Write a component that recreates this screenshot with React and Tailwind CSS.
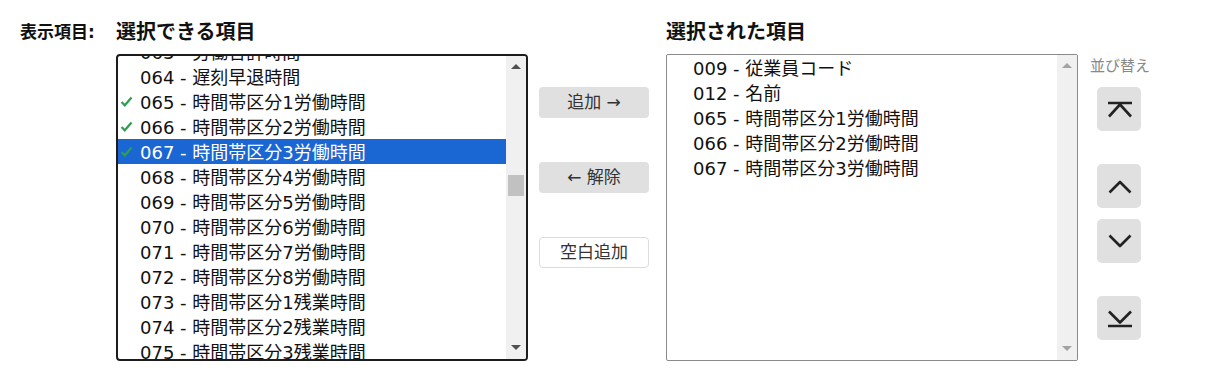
const leftItems = [
  { code: "063", name: "労働合計時間" },
  { code: "064", name: "遅刻早退時間" },
  { code: "065", name: "時間帯区分1労働時間", checked: true },
  { code: "066", name: "時間帯区分2労働時間", checked: true },
  { code: "067", name: "時間帯区分3労働時間", checked: true, active: true },
  { code: "068", name: "時間帯区分4労働時間" },
  { code: "069", name: "時間帯区分5労働時間" },
  { code: "070", name: "時間帯区分6労働時間" },
  { code: "071", name: "時間帯区分7労働時間" },
  { code: "072", name: "時間帯区分8労働時間" },
  { code: "073", name: "時間帯区分1残業時間" },
  { code: "074", name: "時間帯区分2残業時間" },
  { code: "075", name: "時間帯区分3残業時間" },
  { code: "076", name: "時間帯区分4残業時間" },
];

const rightItems = [
  { code: "009", name: "従業員コード" },
  { code: "012", name: "名前" },
  { code: "065", name: "時間帯区分1労働時間" },
  { code: "066", name: "時間帯区分2労働時間" },
  { code: "067", name: "時間帯区分3労働時間" },
];

const Check = () => (
  <svg width="13" height="13" viewBox="0 0 13 13" className="ml-[2px]">
    <path d="M1.5 7 L4.8 10.3 L11.5 2.5" fill="none" stroke="#2f9e52" strokeWidth="2.2" />
  </svg>
);

const Scrollbar = ({ disabled }) => (
  <div className="w-[20px] h-full bg-[#f0f0f0] flex flex-col items-center relative">
    <svg width="10" height="6" viewBox="0 0 10 6" className="mt-[8px]">
      <path d="M0 5 L5 0 L10 5 Z" fill={disabled ? "#a3a3a3" : "#505050"} />
    </svg>
    {!disabled && (
      <div className="absolute left-[2px] top-[119px] w-[16px] h-[21px] bg-[#c1c1c1]" />
    )}
    <div className="flex-1" />
    <svg width="10" height="6" viewBox="0 0 10 6" className="mb-[8px]">
      <path d="M0 0 L10 0 L5 5 Z" fill={disabled ? "#a3a3a3" : "#505050"} />
    </svg>
  </div>
);

const Row = ({ item, pad }) => (
  <div
    className={
      "h-[25px] flex items-center whitespace-nowrap " +
      (item.active ? "bg-[#1a66d2] text-white" : "text-[#111]")
    }
  >
    <div className={pad}>{item.checked && <Check />}</div>
    <span className="pt-[2px]">
      {item.code} - {item.name}
    </span>
  </div>
);

const MoveButton = ({ children }) => (
  <button className="w-[110px] h-[31px] rounded-[4px] bg-[#e0e0e0] text-[#333] text-[17px] leading-none">
    {children}
  </button>
);

const SortButton = ({ d, className }) => (
  <button className={"w-[44px] h-[44px] rounded-[5px] bg-[#e0e0e0] " + className}>
    <svg width="44" height="44" viewBox="0 0 44 44">
      <path d={d} fill="none" stroke="#222" strokeWidth="2.6" strokeLinejoin="round" />
    </svg>
  </button>
);

export default function App() {
  return (
    <div
      className="w-[1228px] h-[381px] bg-white pt-[20px] pl-[20px] flex items-start text-[18px]"
      style={{ fontFamily: '"DejaVu Sans", "Noto Sans CJK JP", sans-serif' }}
    >
      <div className="w-[96px] text-[17px] leading-[24px] font-bold text-[#111]">表示項目:</div>

      <div className="w-[412px]">
        <div className="text-[20px] leading-[24px] font-bold text-[#111]">選択できる項目</div>
        <div className="mt-[10px] h-[307px] border-2 border-[#1c1c1c] rounded-[4px] flex overflow-hidden">
          <div className="flex-1 overflow-hidden">
            <div className="-mt-[17px]">
              {leftItems.map((item) => (
                <Row key={item.code} item={item} pad="w-[22px] flex items-center" />
              ))}
            </div>
          </div>
          <Scrollbar />
        </div>
      </div>

      <div className="ml-[11px] mt-[67px] flex flex-col gap-[44px]">
        <MoveButton>追加 →</MoveButton>
        <MoveButton>← 解除</MoveButton>
        <button className="w-[110px] h-[31px] rounded-[4px] bg-white border border-[#dcdcdc] text-[#333] text-[17px] leading-none">
          空白追加
        </button>
      </div>

      <div className="ml-[17px] w-[412px]">
        <div className="text-[20px] leading-[24px] font-bold text-[#111]">選択された項目</div>
        <div className="mt-[10px] h-[307px] border border-[#8a8a8a] rounded-[2px] flex overflow-hidden">
          <div className="flex-1">
            {rightItems.map((item) => (
              <Row key={item.code} item={item} pad="w-[26px]" />
            ))}
          </div>
          <Scrollbar disabled />
        </div>
      </div>

      <div className="ml-[12px] mt-[34px] flex flex-col">
        <div className="text-[15px] leading-[20px] mt-[2px] text-[#888]">並び替え</div>
        <div className="ml-[7px] flex flex-col">
          <SortButton className="mt-[11px]" d="M11 16 H35 M12 29.5 L23 17.5 L34 29.5" />
          <SortButton className="mt-[33px]" d="M12.5 28.5 L23 18 L33.5 28.5" />
          <SortButton className="mt-[11px]" d="M12.5 16.5 L23 27 L33.5 16.5" />
          <SortButton className="mt-[33px]" d="M12 15.5 L23 26.5 L34 15.5 M11 30 H35" />
        </div>
      </div>
    </div>
  );
}
